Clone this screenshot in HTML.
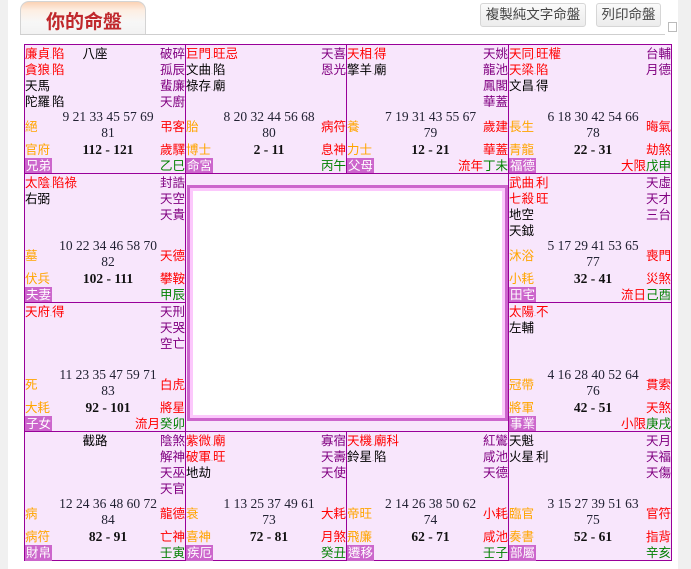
<!DOCTYPE html>
<html><head><meta charset="utf-8">
<style>
*{margin:0;padding:0;box-sizing:border-box}
body{width:691px;height:569px;overflow:hidden;background:#f0f0f0;font-family:"Liberation Sans","WenQuanYi Zen Hei","Noto Sans CJK TC",sans-serif;font-size:12.5px;position:relative}
#wrap{position:absolute;left:8px;top:0;width:670px;height:569px;background:#fff}
#tab{position:absolute;left:20px;top:1px;width:126px;height:34px;border:1px solid #d4d4d4;border-bottom:none;border-radius:9px 9px 0 0;background:linear-gradient(#fbd2b4 0%,#fdeee2 25%,#f7f7f7 60%,#f2f2f2 100%)}
#tab span{position:absolute;left:25px;top:5px;font-size:19px;font-weight:bold;color:#c0282c;font-family:"Noto Sans CJK TC","WenQuanYi Zen Hei",sans-serif}
#hl{position:absolute;left:20px;top:34px;width:645px;height:1px;background:#cfcfcf}
.btn{position:absolute;top:3px;height:24px;border:1px solid #d6d6d6;border-radius:3px;background:linear-gradient(#fafafa,#ececec);color:#444;font-size:13.5px;line-height:22px;text-align:center}
.c{position:absolute;border:1px solid #990099;background:#f8e6fc;height:130px}
.c div{white-space:nowrap}
.c div div,.s,.s2,.o,.o2,.lb,.g,.ct,.r{height:16px;line-height:16px;overflow:visible}
.L{position:absolute;left:0;top:1px;color:#000}
.R{position:absolute;right:0;top:1px;color:#800080;text-align:right}
.red{color:#f00}
.d{font-size:7px;color:#888;line-height:0}
.ct{position:absolute;left:0;right:0;top:1px;text-align:center;color:#000}
.s{position:absolute;left:0;top:74px;color:#ffa500}
.s2{position:absolute;right:0;top:74px;color:#f00}
.n{position:absolute;left:0;right:0;top:64px;text-align:center;font-family:"Liberation Serif",serif;font-size:13.5px;color:#223;padding-left:6px}
.o{position:absolute;left:0;top:97px;color:#ffa500}
.r{position:absolute;left:0;right:0;top:97px;text-align:center;font-family:"Liberation Serif",serif;font-weight:bold;font-size:13.5px;color:#111;padding-left:6px}
.o2{position:absolute;right:0;top:97px;color:#f00}
.lb{position:absolute;left:0;top:113px;background:#cc66cc;color:#fff;padding:0 1px}
.g{position:absolute;right:0;top:113px;color:#008000}
#cen{position:absolute;left:185px;top:173px;width:324px;height:259px;background:#f8e6fc;border:1px solid #990099}
#wb{position:absolute;left:1px;top:11px;width:321px;height:236px;border:3px solid #cc66cc;background:#fff;box-shadow:inset 0 0 0 3px #fcc8fc}
</style></head><body>
<div id="wrap"></div>
<div id="tab"><span>你的命盤</span></div>
<div id="hl"></div>
<div class="btn" style="left:480px;width:106px">複製純文字命盤</div>
<div class="btn" style="left:596px;width:65px">列印命盤</div>
<div style="position:absolute;left:668px;top:22px;width:9px;height:10px;border:1px solid #bbb"></div>

<div class="c" style="left:24px;top:44px;width:162px">
<div class="L"><div class="red">廉貞<span class="d">.</span>陷</div><div class="red">貪狼<span class="d">.</span>陷</div><div>天馬</div><div>陀羅<span class="d">.</span>陷</div></div>
<div class="ct" style="left:-20px">八座</div>
<div class="R"><div>破碎</div><div>孤辰</div><div>蜚廉</div><div>天廚</div></div>
<div class="s">絕</div><div class="s2">弔客</div>
<div class="n"><div>9 21 33 45 57 69</div><div>81</div></div>
<div class="o">官府</div><div class="r">112 - 121</div><div class="o2">歲驛</div>
<div class="lb">兄弟</div><div class="g">乙巳</div>
</div>
<div class="c" style="left:185px;top:44px;width:162px">
<div class="L"><div class="red">巨門<span class="d">.</span>旺忌</div><div>文曲<span class="d">.</span>陷</div><div>祿存<span class="d">.</span>廟</div></div>
<div class="R"><div>天喜</div><div>恩光</div></div>
<div class="s">胎</div><div class="s2">病符</div>
<div class="n"><div>8 20 32 44 56 68</div><div>80</div></div>
<div class="o">博士</div><div class="r">2 - 11</div><div class="o2">息神</div>
<div class="lb">命宮</div><div class="g">丙午</div>
</div>
<div class="c" style="left:346px;top:44px;width:163px">
<div class="L"><div class="red">天相<span class="d">.</span>得</div><div>擎羊<span class="d">.</span>廟</div></div>
<div class="R"><div>天姚</div><div>龍池</div><div>鳳閣</div><div>華蓋</div></div>
<div class="s">養</div><div class="s2">歲建</div>
<div class="n"><div>7 19 31 43 55 67</div><div>79</div></div>
<div class="o">力士</div><div class="r">12 - 21</div><div class="o2">華蓋</div>
<div class="lb">父母</div><div class="g"><span class="red">流年</span>丁未</div>
</div>
<div class="c" style="left:508px;top:44px;width:164px">
<div class="L"><div class="red">天同<span class="d">.</span>旺權</div><div class="red">天梁<span class="d">.</span>陷</div><div>文昌<span class="d">.</span>得</div></div>
<div class="R"><div>台輔</div><div>月德</div></div>
<div class="s">長生</div><div class="s2">晦氣</div>
<div class="n"><div>6 18 30 42 54 66</div><div>78</div></div>
<div class="o">青龍</div><div class="r">22 - 31</div><div class="o2">劫煞</div>
<div class="lb">福德</div><div class="g"><span class="red">大限</span>戊申</div>
</div>

<div class="c" style="left:24px;top:173px;width:162px">
<div class="L"><div class="red">太陰<span class="d">.</span>陷祿</div><div>右弼</div></div>
<div class="R"><div>封誥</div><div>天空</div><div>天貴</div></div>
<div class="s">墓</div><div class="s2">天德</div>
<div class="n"><div>10 22 34 46 58 70</div><div>82</div></div>
<div class="o">伏兵</div><div class="r">102 - 111</div><div class="o2">攀鞍</div>
<div class="lb">夫妻</div><div class="g">甲辰</div>
</div>
<div class="c" style="left:508px;top:173px;width:164px">
<div class="L"><div class="red">武曲<span class="d">.</span>利</div><div class="red">七殺<span class="d">.</span>旺</div><div>地空</div><div>天鉞</div></div>
<div class="R"><div>天虛</div><div>天才</div><div>三台</div></div>
<div class="s">沐浴</div><div class="s2">喪門</div>
<div class="n"><div>5 17 29 41 53 65</div><div>77</div></div>
<div class="o">小耗</div><div class="r">32 - 41</div><div class="o2">災煞</div>
<div class="lb">田宅</div><div class="g"><span class="red">流日</span>己酉</div>
</div>

<div class="c" style="left:24px;top:302px;width:162px">
<div class="L"><div class="red">天府<span class="d">.</span>得</div></div>
<div class="R"><div>天刑</div><div>天哭</div><div>空亡</div></div>
<div class="s">死</div><div class="s2">白虎</div>
<div class="n"><div>11 23 35 47 59 71</div><div>83</div></div>
<div class="o">大耗</div><div class="r">92 - 101</div><div class="o2">將星</div>
<div class="lb">子女</div><div class="g"><span class="red">流月</span>癸卯</div>
</div>
<div class="c" style="left:508px;top:302px;width:164px">
<div class="L"><div class="red">太陽<span class="d">.</span>不</div><div>左輔</div></div>
<div class="s">冠帶</div><div class="s2">貫索</div>
<div class="n"><div>4 16 28 40 52 64</div><div>76</div></div>
<div class="o">將軍</div><div class="r">42 - 51</div><div class="o2">天煞</div>
<div class="lb">事業</div><div class="g"><span class="red">小限</span>庚戌</div>
</div>

<div id="cen"><div id="wb"></div></div>

<div class="c" style="left:24px;top:431px;width:162px">
<div class="ct" style="left:-20px">截路</div>
<div class="R"><div>陰煞</div><div>解神</div><div>天巫</div><div>天官</div></div>
<div class="s">病</div><div class="s2">龍德</div>
<div class="n"><div>12 24 36 48 60 72</div><div>84</div></div>
<div class="o">病符</div><div class="r">82 - 91</div><div class="o2">亡神</div>
<div class="lb">財帛</div><div class="g">壬寅</div>
</div>
<div class="c" style="left:185px;top:431px;width:162px">
<div class="L"><div class="red">紫微<span class="d">.</span>廟</div><div class="red">破軍<span class="d">.</span>旺</div><div>地劫</div></div>
<div class="R"><div>寡宿</div><div>天壽</div><div>天使</div></div>
<div class="s">衰</div><div class="s2">大耗</div>
<div class="n"><div>1 13 25 37 49 61</div><div>73</div></div>
<div class="o">喜神</div><div class="r">72 - 81</div><div class="o2">月煞</div>
<div class="lb">疾厄</div><div class="g">癸丑</div>
</div>
<div class="c" style="left:346px;top:431px;width:163px">
<div class="L"><div class="red">天機<span class="d">.</span>廟科</div><div>鈴星<span class="d">.</span>陷</div></div>
<div class="R"><div>紅鸞</div><div>咸池</div><div>天德</div></div>
<div class="s">帝旺</div><div class="s2">小耗</div>
<div class="n"><div>2 14 26 38 50 62</div><div>74</div></div>
<div class="o">飛廉</div><div class="r">62 - 71</div><div class="o2">咸池</div>
<div class="lb">遷移</div><div class="g">壬子</div>
</div>
<div class="c" style="left:508px;top:431px;width:164px">
<div class="L"><div>天魁</div><div>火星<span class="d">.</span>利</div></div>
<div class="R"><div>天月</div><div>天福</div><div>天傷</div></div>
<div class="s">臨官</div><div class="s2">官符</div>
<div class="n"><div>3 15 27 39 51 63</div><div>75</div></div>
<div class="o">奏書</div><div class="r">52 - 61</div><div class="o2">指背</div>
<div class="lb">部屬</div><div class="g">辛亥</div>
</div>
</body></html>
